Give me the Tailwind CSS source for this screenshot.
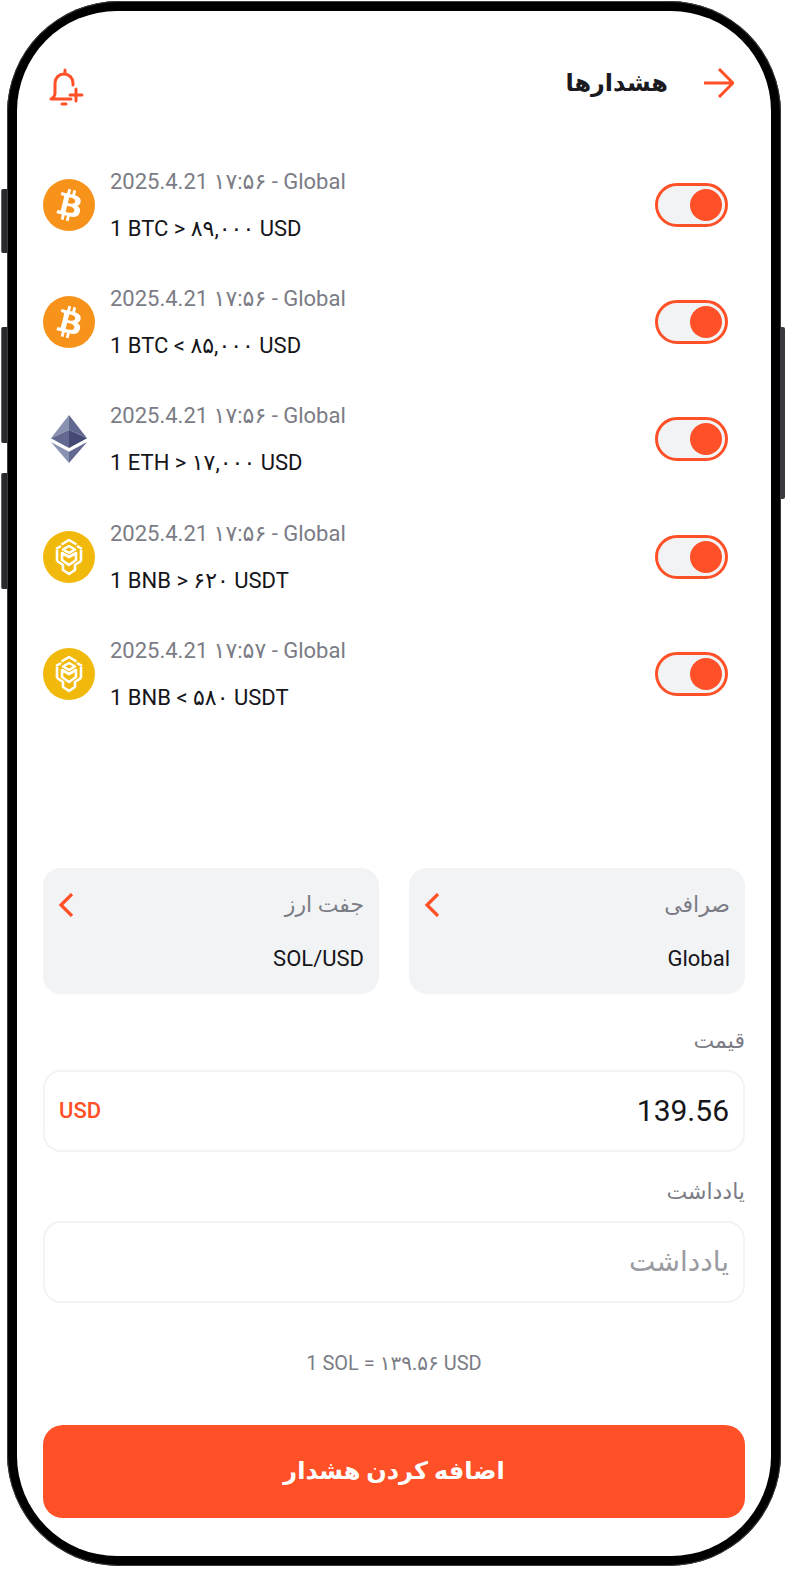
<!DOCTYPE html>
<html lang="fa">
  <head>
    <meta charset="UTF-8" />
    <meta name="viewport" content="width=device-width, initial-scale=1.0" />
    <title>هشدارها</title>
    <script src="https://cdn.jsdelivr.net/npm/@tailwindcss/browser@4"></script>
  </head>
  <body class="bg-white">
    <div class="w-[785px] h-[1576px] pt-px pl-[7px] bg-white font-['Roboto','DejaVu_Sans',sans-serif] overflow-hidden">
      <!-- Phone frame -->
      <div class="relative w-[774px] h-[1565px] rounded-[112px] bg-black p-[10px] shadow-[inset_0_0_0_1px_#3a3a40]">
        <!-- Side buttons -->
        <div class="absolute left-[-6px] top-[188px] w-[6px] h-[64px] rounded-l-[2px] bg-[#2a2a2e] border-l border-[#66666c]"></div>
        <div class="absolute left-[-6px] top-[326px] w-[6px] h-[116px] rounded-l-[2px] bg-[#2a2a2e] border-l border-[#66666c]"></div>
        <div class="absolute left-[-6px] top-[472px] w-[6px] h-[116px] rounded-l-[2px] bg-[#2a2a2e] border-l border-[#66666c]"></div>
        <div class="absolute right-[-4px] top-[326px] w-[4px] h-[172px] rounded-r-[2px] bg-[#3a3a3e]"></div>

        <!-- Screen -->
        <div class="w-[754px] h-[1545px] rounded-[100px] bg-white overflow-hidden flex flex-col">
          <!-- Header -->
          <div class="h-[135px] pt-[56px] pl-[32px] pr-[37px] flex items-start justify-between">
            <svg class="w-[36px] h-[40px]" viewBox="0 0 36 40" fill="none" stroke="#ff5027" stroke-width="3" stroke-linecap="round" stroke-linejoin="round">
              <path d="M16 3v3" />
              <path d="M24 18v-2a9 9 0 0 0-18 0v10c0 3-2 5-4 6h20" />
              <path d="M13 37h4" />
              <path d="M27 22v12M21 28h12" />
            </svg>
            <div class="flex items-center gap-[36px] h-[32px]">
              <span dir="rtl" class="text-[24px] font-bold text-[#1a1a1f]">هشدارها</span>
              <svg class="w-[30px] h-[30px]" viewBox="0 0 30 30" fill="none" stroke="#ff5027" stroke-width="3">
                <path d="M0 15h28M15 1l14 14-14 14" />
              </svg>
            </div>
          </div>

          <!-- Alert list -->
          <div class="flex flex-col pl-[26px] pr-[43px]">
            <div class="h-[117.4px] flex items-center justify-between">
              <div class="flex items-center gap-[15px]">
                <svg class="w-[52px] h-[52px]" viewBox="0 0 32 32"><circle cx="16" cy="16" r="16" fill="#f7931a" /><path fill="#fff" d="M23.189 14.02c.314-2.096-1.283-3.223-3.465-3.975l.708-2.84-1.728-.43-.69 2.765c-.454-.114-.92-.22-1.385-.326l.695-2.783L15.596 6l-.708 2.839c-.376-.086-.746-.17-1.104-.26l.002-.009-2.384-.595-.46 1.846s1.283.294 1.256.312c.7.175.826.638.805 1.006l-.806 3.235c.048.012.11.03.18.057l-.183-.045-1.13 4.532c-.086.212-.303.531-.793.41.018.025-1.256-.313-1.256-.313l-.858 1.978 2.25.561c.418.105.828.215 1.231.318l-.715 2.872 1.727.43.708-2.84c.472.127.93.245 1.378.357l-.706 2.828 1.728.43.715-2.866c2.948.558 5.164.333 6.097-2.333.752-2.146-.037-3.385-1.588-4.192 1.13-.26 1.98-1.003 2.207-2.538zm-3.95 5.538c-.533 2.147-4.148.986-5.32.695l.95-3.805c1.172.293 4.929.872 4.37 3.11zm.535-5.569c-.487 1.953-3.495.96-4.47.717l.86-3.45c.975.243 4.118.696 3.61 2.733z" /></svg>
                <div class="flex flex-col gap-[18px] text-[22px] leading-[29px]">
                  <span class="text-[#7b7c85]">2025.4.21 ۱۷:۵۶ - Global</span>
                  <span class="text-[#15151a]">1 BTC &gt; ۸۹,۰۰۰ USD</span>
                </div>
              </div>
              <div class="w-[73px] h-[44px] rounded-full border-[3px] border-[#ff5027] bg-[#f2f3f5] flex items-center justify-end pr-[3px]"><div class="w-[32px] h-[32px] rounded-full bg-[#ff5027]"></div></div>
            </div>
            <div class="h-[117.4px] flex items-center justify-between">
              <div class="flex items-center gap-[15px]">
                <svg class="w-[52px] h-[52px]" viewBox="0 0 32 32"><circle cx="16" cy="16" r="16" fill="#f7931a" /><path fill="#fff" d="M23.189 14.02c.314-2.096-1.283-3.223-3.465-3.975l.708-2.84-1.728-.43-.69 2.765c-.454-.114-.92-.22-1.385-.326l.695-2.783L15.596 6l-.708 2.839c-.376-.086-.746-.17-1.104-.26l.002-.009-2.384-.595-.46 1.846s1.283.294 1.256.312c.7.175.826.638.805 1.006l-.806 3.235c.048.012.11.03.18.057l-.183-.045-1.13 4.532c-.086.212-.303.531-.793.41.018.025-1.256-.313-1.256-.313l-.858 1.978 2.25.561c.418.105.828.215 1.231.318l-.715 2.872 1.727.43.708-2.84c.472.127.93.245 1.378.357l-.706 2.828 1.728.43.715-2.866c2.948.558 5.164.333 6.097-2.333.752-2.146-.037-3.385-1.588-4.192 1.13-.26 1.98-1.003 2.207-2.538zm-3.95 5.538c-.533 2.147-4.148.986-5.32.695l.95-3.805c1.172.293 4.929.872 4.37 3.11zm.535-5.569c-.487 1.953-3.495.96-4.47.717l.86-3.45c.975.243 4.118.696 3.61 2.733z" /></svg>
                <div class="flex flex-col gap-[18px] text-[22px] leading-[29px]">
                  <span class="text-[#7b7c85]">2025.4.21 ۱۷:۵۶ - Global</span>
                  <span class="text-[#15151a]">1 BTC &lt; ۸۵,۰۰۰ USD</span>
                </div>
              </div>
              <div class="w-[73px] h-[44px] rounded-full border-[3px] border-[#ff5027] bg-[#f2f3f5] flex items-center justify-end pr-[3px]"><div class="w-[32px] h-[32px] rounded-full bg-[#ff5027]"></div></div>
            </div>
            <div class="h-[117.4px] flex items-center justify-between">
              <div class="flex items-center gap-[15px]">
                <svg class="w-[52px] h-[52px]" viewBox="-48 -5 136 138">
                  <path fill="#8a92b2" d="M20 0-28 62 20 40z" transform="translate(0 0)" />
                  <path fill="#62688f" d="M20 0l48 62-48-22z" />
                  <path fill="#62688f" d="M-28 62l48 26V40z" />
                  <path fill="#454a75" d="M68 62L20 88V40z" />
                  <path fill="#8a92b2" d="M-28 72l48 56V98z" />
                  <path fill="#62688f" d="M68 72l-48 56V98z" />
                </svg>
                <div class="flex flex-col gap-[18px] text-[22px] leading-[29px]">
                  <span class="text-[#7b7c85]">2025.4.21 ۱۷:۵۶ - Global</span>
                  <span class="text-[#15151a]">1 ETH &gt; ۱۷,۰۰۰ USD</span>
                </div>
              </div>
              <div class="w-[73px] h-[44px] rounded-full border-[3px] border-[#ff5027] bg-[#f2f3f5] flex items-center justify-end pr-[3px]"><div class="w-[32px] h-[32px] rounded-full bg-[#ff5027]"></div></div>
            </div>
            <div class="h-[117.4px] flex items-center justify-between">
              <div class="flex items-center gap-[15px]">
                <svg class="w-[52px] h-[52px]" viewBox="0 0 52 52"><circle cx="26" cy="26" r="26" fill="#f0b90b" /><g fill="none" stroke="#fff" stroke-width="2.6" stroke-linejoin="round"><path d="M26 15l6 3.5-6 3.5-6-3.5z" /><path d="M18.5 13.5L26 9l7.5 4.500M38 19v11M14 19v11M39 18l-5-3M13 18l5-3" /><path d="M14 30l6 4v5l6 4 6-4v-5l6-4" /><path d="M19 22l7 4 7-4v7l-7 5-7-5z" /></g></svg>
                <div class="flex flex-col gap-[18px] text-[22px] leading-[29px]">
                  <span class="text-[#7b7c85]">2025.4.21 ۱۷:۵۶ - Global</span>
                  <span class="text-[#15151a]">1 BNB &gt; ۶۲۰ USDT</span>
                </div>
              </div>
              <div class="w-[73px] h-[44px] rounded-full border-[3px] border-[#ff5027] bg-[#f2f3f5] flex items-center justify-end pr-[3px]"><div class="w-[32px] h-[32px] rounded-full bg-[#ff5027]"></div></div>
            </div>
            <div class="h-[117.4px] flex items-center justify-between">
              <div class="flex items-center gap-[15px]">
                <svg class="w-[52px] h-[52px]" viewBox="0 0 52 52"><circle cx="26" cy="26" r="26" fill="#f0b90b" /><g fill="none" stroke="#fff" stroke-width="2.6" stroke-linejoin="round"><path d="M26 15l6 3.5-6 3.5-6-3.5z" /><path d="M18.5 13.5L26 9l7.5 4.500M38 19v11M14 19v11M39 18l-5-3M13 18l5-3" /><path d="M14 30l6 4v5l6 4 6-4v-5l6-4" /><path d="M19 22l7 4 7-4v7l-7 5-7-5z" /></g></svg>
                <div class="flex flex-col gap-[18px] text-[22px] leading-[29px]">
                  <span class="text-[#7b7c85]">2025.4.21 ۱۷:۵۷ - Global</span>
                  <span class="text-[#15151a]">1 BNB &lt; ۵۸۰ USDT</span>
                </div>
              </div>
              <div class="w-[73px] h-[44px] rounded-full border-[3px] border-[#ff5027] bg-[#f2f3f5] flex items-center justify-end pr-[3px]"><div class="w-[32px] h-[32px] rounded-full bg-[#ff5027]"></div></div>
            </div>
          </div>

          <!-- Form sheet -->
          <div dir="rtl" class="mt-[135px] px-[26px] flex flex-col">
            <div class="grid grid-cols-2 gap-[30px]">
              <div class="h-[126px] rounded-[18px] bg-[#f2f3f5] px-[15px] pt-[22px] flex flex-col gap-[22px]">
                <div class="flex items-center justify-between h-[30px]">
                  <span class="text-[22px] text-[#7b7c85]">صرافی</span>
                  <svg class="w-[16px] h-[24px] ml-[0px]" viewBox="0 0 16 24" fill="none" stroke="#ff5027" stroke-width="3.2"><path d="M14 1L3 12l11 11" /></svg>
                </div>
                <span class="text-[22px] text-[#15151a]">Global</span>
              </div>
              <div class="h-[126px] rounded-[18px] bg-[#f2f3f5] px-[15px] pt-[22px] flex flex-col gap-[22px]">
                <div class="flex items-center justify-between h-[30px]">
                  <span class="text-[22px] text-[#7b7c85]">جفت ارز</span>
                  <svg class="w-[16px] h-[24px]" viewBox="0 0 16 24" fill="none" stroke="#ff5027" stroke-width="3.2"><path d="M14 1L3 12l11 11" /></svg>
                </div>
                <span class="text-[22px] text-[#15151a]">SOL/USD</span>
              </div>
            </div>

            <label class="mt-[32px] text-[22px] leading-[30px] text-[#7b7c85]">قیمت</label>
            <div class="mt-[14px] h-[82px] rounded-[18px] border-2 border-[#f2f3f5] px-[14px] flex items-center justify-between">
              <span class="text-[30px] text-[#15151a]">139.56</span>
              <span class="text-[22px] font-medium text-[#ff5027]">USD</span>
            </div>

            <label class="mt-[25px] text-[22px] leading-[30px] text-[#7b7c85]">یادداشت</label>
            <div class="mt-[14px] h-[82px] rounded-[18px] border-2 border-[#f2f3f5] px-[14px] flex items-center">
              <span class="text-[28px] text-[#9a9ba2]">یادداشت</span>
            </div>

            <p dir="ltr" class="mt-[46px] text-center text-[20px] leading-[28px] text-[#7b7c85]">1 SOL = ۱۳۹.۵۶ USD</p>

            <button class="mt-[48px] h-[93px] rounded-[20px] bg-[#ff5027] text-white text-[24px] font-bold">اضافه کردن هشدار</button>
          </div>
        </div>
      </div>
    </div>
  </body>
</html>
